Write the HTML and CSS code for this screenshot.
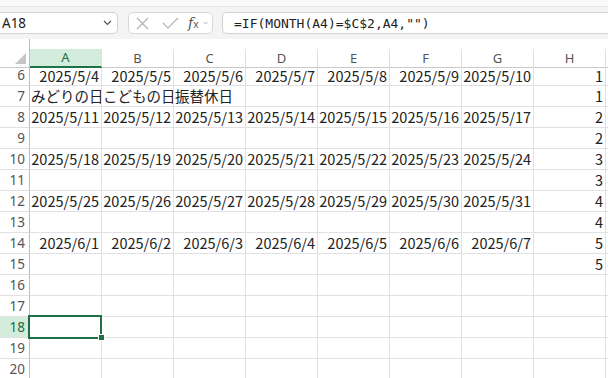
FILE: index.html
```html
<!DOCTYPE html>
<html lang="ja">
<head>
    <meta charset="UTF-8">
    <title>Sheet1</title>
    <link rel="stylesheet" href="styles.css">
</head>
<body>

    <div class="ribbon-edge"></div>
    <div class="formula-bar">
        <div class="name-box">
            <span>A18</span>
            <svg class="chevron" width="9" height="6" viewBox="0 0 9 6"><polyline points="1,1 4.5,4.5 8,1" fill="none" stroke="#555" stroke-width="1.2"/></svg>
        </div>
        <div class="fx-buttons">
            <svg width="13" height="13" viewBox="0 0 13 13"><path d="M1 1 L12 12 M12 1 L1 12" stroke="#b4b4b4" stroke-width="1.2" fill="none"/></svg>
            <svg width="17" height="12" viewBox="0 0 17 12"><polyline points="1,6 6,11 16,1" stroke="#b4b4b4" stroke-width="1.2" fill="none"/></svg>
            <span class="fx"><i>f</i><span class="x">x</span></span>
            <svg width="5" height="4" viewBox="0 0 5 4"><polyline points="0.5,1 2.5,3 4.5,1" fill="none" stroke="#aaa" stroke-width="0.9"/></svg>
        </div>
        <div class="formula">=IF(MONTH(A4)=$C$2,A4,"")</div>
    </div>

    <div class="sheet">
        <div class="col-head">
            <div class="corner"><span class="tri"></span></div>
            <div class="ch active">A</div>
            <div class="ch">B</div>
            <div class="ch">C</div>
            <div class="ch">D</div>
            <div class="ch">E</div>
            <div class="ch">F</div>
            <div class="ch">G</div>
            <div class="ch">H</div>
            <div class="ch last"></div>
        </div>

        <div class="row first">
            <div class="rh">6</div>
            <div class="c n">2025/5/4</div><div class="c n">2025/5/5</div><div class="c n">2025/5/6</div><div class="c n">2025/5/7</div>
            <div class="c n">2025/5/8</div><div class="c n">2025/5/9</div><div class="c n">2025/5/10</div><div class="c n">1</div><div class="c"></div>
        </div>
        <div class="row">
            <div class="rh">7</div>
            <div class="c"><span>みどりの日</span></div><div class="c"><span>こどもの日</span></div><div class="c"><span>振替休日</span></div><div class="c"></div>
            <div class="c"></div><div class="c"></div><div class="c"></div><div class="c n">1</div><div class="c"></div>
        </div>
        <div class="row">
            <div class="rh">8</div>
            <div class="c n">2025/5/11</div><div class="c n">2025/5/12</div><div class="c n">2025/5/13</div><div class="c n">2025/5/14</div>
            <div class="c n">2025/5/15</div><div class="c n">2025/5/16</div><div class="c n">2025/5/17</div><div class="c n">2</div><div class="c"></div>
        </div>
        <div class="row">
            <div class="rh">9</div>
            <div class="c"></div><div class="c"></div><div class="c"></div><div class="c"></div>
            <div class="c"></div><div class="c"></div><div class="c"></div><div class="c n">2</div><div class="c"></div>
        </div>
        <div class="row">
            <div class="rh">10</div>
            <div class="c n">2025/5/18</div><div class="c n">2025/5/19</div><div class="c n">2025/5/20</div><div class="c n">2025/5/21</div>
            <div class="c n">2025/5/22</div><div class="c n">2025/5/23</div><div class="c n">2025/5/24</div><div class="c n">3</div><div class="c"></div>
        </div>
        <div class="row">
            <div class="rh">11</div>
            <div class="c"></div><div class="c"></div><div class="c"></div><div class="c"></div>
            <div class="c"></div><div class="c"></div><div class="c"></div><div class="c n">3</div><div class="c"></div>
        </div>
        <div class="row">
            <div class="rh">12</div>
            <div class="c n">2025/5/25</div><div class="c n">2025/5/26</div><div class="c n">2025/5/27</div><div class="c n">2025/5/28</div>
            <div class="c n">2025/5/29</div><div class="c n">2025/5/30</div><div class="c n">2025/5/31</div><div class="c n">4</div><div class="c"></div>
        </div>
        <div class="row">
            <div class="rh">13</div>
            <div class="c"></div><div class="c"></div><div class="c"></div><div class="c"></div>
            <div class="c"></div><div class="c"></div><div class="c"></div><div class="c n">4</div><div class="c"></div>
        </div>
        <div class="row">
            <div class="rh">14</div>
            <div class="c n">2025/6/1</div><div class="c n">2025/6/2</div><div class="c n">2025/6/3</div><div class="c n">2025/6/4</div>
            <div class="c n">2025/6/5</div><div class="c n">2025/6/6</div><div class="c n">2025/6/7</div><div class="c n">5</div><div class="c"></div>
        </div>
        <div class="row">
            <div class="rh">15</div>
            <div class="c"></div><div class="c"></div><div class="c"></div><div class="c"></div>
            <div class="c"></div><div class="c"></div><div class="c"></div><div class="c n">5</div><div class="c"></div>
        </div>
        <div class="row">
            <div class="rh">16</div>
            <div class="c"></div><div class="c"></div><div class="c"></div><div class="c"></div>
            <div class="c"></div><div class="c"></div><div class="c"></div><div class="c"></div><div class="c"></div>
        </div>
        <div class="row">
            <div class="rh">17</div>
            <div class="c"></div><div class="c"></div><div class="c"></div><div class="c"></div>
            <div class="c"></div><div class="c"></div><div class="c"></div><div class="c"></div><div class="c"></div>
        </div>
        <div class="row">
            <div class="rh active">18</div>
            <div class="c selected"></div><div class="c"></div><div class="c"></div><div class="c"></div>
            <div class="c"></div><div class="c"></div><div class="c"></div><div class="c"></div><div class="c"></div>
        </div>
        <div class="row">
            <div class="rh">19</div>
            <div class="c"></div><div class="c"></div><div class="c"></div><div class="c"></div>
            <div class="c"></div><div class="c"></div><div class="c"></div><div class="c"></div><div class="c"></div>
        </div>
        <div class="row">
            <div class="rh">20</div>
            <div class="c"></div><div class="c"></div><div class="c"></div><div class="c"></div>
            <div class="c"></div><div class="c"></div><div class="c"></div><div class="c"></div><div class="c"></div>
        </div>
    </div>

</body>
</html>
```

FILE: styles.css
```css
body {
    margin: 0;
    padding: 0;
    background: #fff;
    font-family: "Noto Sans", sans-serif;
    color: #222;
    overflow: hidden;
}

/* formula bar */
.ribbon-edge {
    height: 6px;
    background: #fafafa;
    border-bottom: 1px solid #e8e8e8;
}

.formula-bar {
    height: 32px;
    box-sizing: border-box;
    padding: 5px 0;
    background: #f4f4f4;
    display: flex;
    align-items: stretch;
}

.name-box {
    width: 124px;
    margin-left: -6px;
    margin-right: 10px;
    box-sizing: border-box;
    padding-left: 7px;
    padding-right: 5px;
    background: #fff;
    border: 1px solid #d2d2d2;
    border-radius: 5px;
    display: flex;
    align-items: center;
    justify-content: space-between;
    font-size: 13.5px;
    color: #222;
}

.fx-buttons {
    width: 85px;
    margin-right: 9px;
    box-sizing: border-box;
    background: #fff;
    border: 1px solid #d8d8d8;
    border-radius: 5px;
    display: flex;
    align-items: center;
    padding-left: 7px;
}

.fx-buttons svg:nth-child(1) { margin-right: 13px; }
.fx-buttons svg:nth-child(2) { margin-right: 9px; }

.fx {
    font-family: "DejaVu Serif", serif;
    font-size: 14px;
    color: #555;
    margin-right: 5px;
    line-height: 1;
}

.fx .x {
    font-family: "Noto Sans", sans-serif;
    font-size: 10px;
}

.formula {
    flex: 1;
    background: #fff;
    border: 1px solid #d2d2d2;
    border-right: none;
    border-radius: 5px 0 0 5px;
    display: flex;
    align-items: center;
    padding-left: 11px;
    font-family: "DejaVu Sans Mono", monospace;
    font-size: 13px;
    color: #222;
}

/* grid */
.col-head,
.row {
    display: grid;
    grid-template-columns: 30px repeat(8, 72px) 1fr;
}

.col-head {
    height: 29px;
    align-items: end;
}

.corner {
    height: 29px;
    box-sizing: border-box;
    border-right: 1px solid #bdbdbd;
    border-bottom: 1px solid #c9c9c9;
    position: relative;
}

.tri {
    position: absolute;
    right: 3px;
    bottom: 3px;
    width: 0;
    height: 0;
    border-left: 11px solid transparent;
    border-bottom: 11px solid #c6c6c6;
}

.ch {
    height: 19px;
    box-sizing: border-box;
    border-right: 1px solid #e0e0e0;
    border-bottom: 1px solid #c9c9c9;
    font-size: 13px;
    color: #555;
    text-align: center;
    line-height: 18px;
}

.ch.active {
    background: #d3ecdb;
    color: #1e6e42;
    border-bottom: 2px solid #1e7145;
    line-height: 17px;
}

.ch.last { border-right: none; }

.row {
    height: 21px;
}

.row.first {
    height: 18px;
}

.rh,
.c {
    box-sizing: border-box;
    border-bottom: 1px solid #e1e1e1;
    overflow: hidden;
    white-space: nowrap;
    display: flex;
    align-items: flex-end;
    line-height: 20px;
}

/* row 6 is partly scrolled under the header */
.row.first .rh,
.row.first .c {
    line-height: 15px;
    padding-bottom: 2px;
}

.rh {
    border-right: 1px solid #bdbdbd;
    justify-content: flex-end;
    padding-right: 4px;
    font-size: 13.5px;
    color: #555;
}

.rh.active {
    background: #d3ecdb;
    color: #1e6e42;
}

.c {
    border-right: 1px solid #e1e1e1;
    padding: 0 2px 0 1px;
    font-family: "Noto Sans CJK JP", sans-serif;
    font-size: 14.5px;
    color: #222;
}

.c.n { justify-content: flex-end; }

.c.selected {
    position: relative;
    overflow: visible;
}

.c.selected::after {
    content: "";
    position: absolute;
    left: -2px;
    top: -2px;
    right: -1px;
    bottom: -2px;
    border: 2px solid #1e7145;
}

.c.selected::before {
    content: "";
    position: absolute;
    right: -4px;
    bottom: -4px;
    width: 5px;
    height: 5px;
    background: #1e7145;
    border: 1px solid #fff;
    z-index: 2;
}
```
